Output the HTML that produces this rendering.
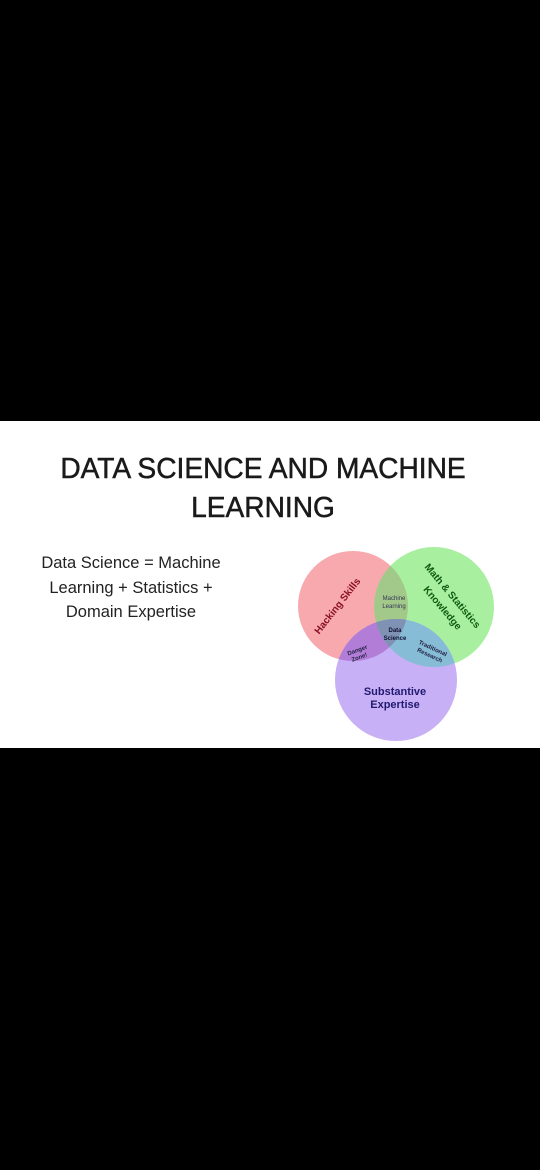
<!DOCTYPE html>
<html><head><style>
html,body{margin:0;padding:0;background:#000;width:540px;height:1170px;overflow:hidden;font-family:"Liberation Sans",sans-serif}
.w{position:absolute;left:0;top:421px;width:540px;height:327px;background:#fff}
.t{position:absolute;left:0;width:526px;text-align:center;font-size:29px;color:#1a1a1a;transform:scaleX(0.97);transform-origin:263px 0;white-space:nowrap;-webkit-text-stroke:0.5px #1a1a1a}
.s{position:absolute;left:18px;width:226px;text-align:center;font-size:16.5px;color:#222;line-height:24.5px;top:130px}
</style></head><body>
<div class="w">
<div class="t" style="top:32px">DATA SCIENCE AND MACHINE</div>
<div class="t" style="top:71px">LEARNING</div>
<div class="s">Data Science = Machine<br>Learning + Statistics +<br>Domain Expertise</div>
<svg style="position:absolute;left:0;top:0" width="540" height="327" viewBox="0 421 540 327">
<defs>
<clipPath id="r"><circle cx="353" cy="606" r="55"/></clipPath>
<clipPath id="g"><circle cx="434" cy="607" r="60"/></clipPath>
<clipPath id="p"><circle cx="396" cy="680" r="61"/></clipPath>
</defs>
<circle cx="353" cy="606" r="55" fill="#f7a9ad"/>
<circle cx="434" cy="607" r="60" fill="#a8f0a0"/>
<circle cx="396" cy="680" r="61" fill="#c7b0f5"/>
<g clip-path="url(#r)"><circle cx="434" cy="607" r="60" fill="#a2c98a"/><circle cx="396" cy="680" r="61" fill="#b27dd6"/></g>
<g clip-path="url(#g)"><circle cx="396" cy="680" r="61" fill="#86bcd6"/></g>
<g clip-path="url(#r)"><g clip-path="url(#g)"><circle cx="396" cy="680" r="61" fill="#7f92b4"/></g></g>
<g font-family="Liberation Sans" font-weight="bold">
<text x="340" y="608" font-size="10" fill="#8a1020" transform="rotate(-52 340 608)" text-anchor="middle">Hacking Skills</text>
<text x="450" y="598" font-size="10" fill="#0e5a10" transform="rotate(50 450 598)" text-anchor="middle">Math &amp; Statistics</text>
<text x="440" y="610" font-size="10" fill="#0e5a10" transform="rotate(50 440 610)" text-anchor="middle">Knowledge</text>
<text x="394" y="600" font-size="6" fill="#335" text-anchor="middle" font-weight="normal">Machine</text>
<text x="394" y="608" font-size="6" fill="#335" text-anchor="middle" font-weight="normal">Learning</text>
<text x="395" y="632" font-size="6" fill="#113" text-anchor="middle">Data</text>
<text x="395" y="640" font-size="6" fill="#113" text-anchor="middle">Science</text>
<text x="358" y="652" font-size="6" fill="#224" text-anchor="middle" transform="rotate(-20 358 652)">Danger</text>
<text x="360" y="659" font-size="6" fill="#224" text-anchor="middle" transform="rotate(-20 360 659)">Zone!</text>
<text x="432" y="650" font-size="6" fill="#224" text-anchor="middle" transform="rotate(25 432 650)">Traditional</text>
<text x="429" y="657" font-size="6" fill="#224" text-anchor="middle" transform="rotate(25 429 657)">Research</text>
<text x="395" y="695" font-size="11" fill="#221a70" text-anchor="middle">Substantive</text>
<text x="395" y="708" font-size="11" fill="#221a70" text-anchor="middle">Expertise</text>
</g>
</svg>
</div>
</body></html>
